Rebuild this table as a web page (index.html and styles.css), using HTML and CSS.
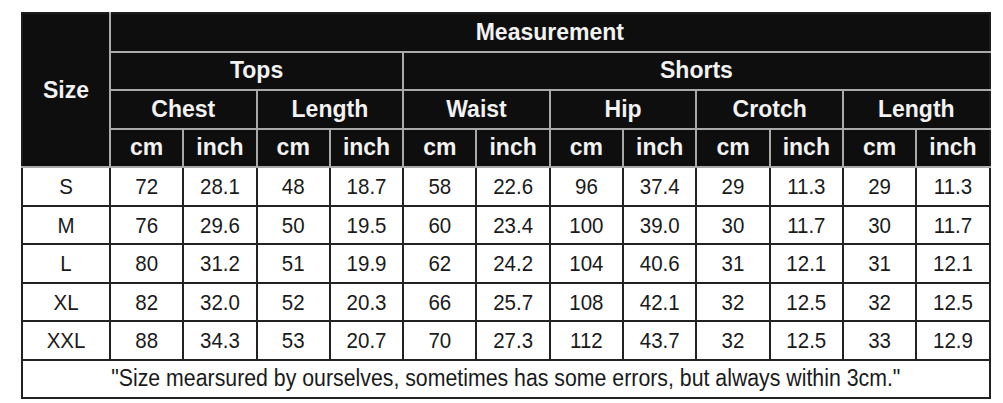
FILE: index.html
```html
<!DOCTYPE html>
<html>
<head>
<meta charset="utf-8">
<link rel="stylesheet" href="styles.css">
</head>
<body>
<table class="chart">
  <colgroup>
    <col class="c-size">
    <col><col><col><col><col><col><col><col><col><col><col><col>
  </colgroup>
  <thead>
    <tr>
      <th rowspan="4" class="size-h">Size</th>
      <th colspan="12">Measurement</th>
    </tr>
    <tr>
      <th colspan="4">Tops</th>
      <th colspan="8">Shorts</th>
    </tr>
    <tr>
      <th colspan="2">Chest</th>
      <th colspan="2">Length</th>
      <th colspan="2">Waist</th>
      <th colspan="2">Hip</th>
      <th colspan="2">Crotch</th>
      <th colspan="2">Length</th>
    </tr>
    <tr>
      <th>cm</th><th>inch</th><th>cm</th><th>inch</th><th>cm</th><th>inch</th>
      <th>cm</th><th>inch</th><th>cm</th><th>inch</th><th>cm</th><th>inch</th>
    </tr>
  </thead>
  <tbody>
    <tr><td><span>S</span></td><td><span>72</span></td><td><span>28.1</span></td><td><span>48</span></td><td><span>18.7</span></td><td><span>58</span></td><td><span>22.6</span></td><td><span>96</span></td><td><span>37.4</span></td><td><span>29</span></td><td><span>11.3</span></td><td><span>29</span></td><td><span>11.3</span></td></tr>
    <tr><td><span>M</span></td><td><span>76</span></td><td><span>29.6</span></td><td><span>50</span></td><td><span>19.5</span></td><td><span>60</span></td><td><span>23.4</span></td><td><span>100</span></td><td><span>39.0</span></td><td><span>30</span></td><td><span>11.7</span></td><td><span>30</span></td><td><span>11.7</span></td></tr>
    <tr><td><span>L</span></td><td><span>80</span></td><td><span>31.2</span></td><td><span>51</span></td><td><span>19.9</span></td><td><span>62</span></td><td><span>24.2</span></td><td><span>104</span></td><td><span>40.6</span></td><td><span>31</span></td><td><span>12.1</span></td><td><span>31</span></td><td><span>12.1</span></td></tr>
    <tr><td><span>XL</span></td><td><span>82</span></td><td><span>32.0</span></td><td><span>52</span></td><td><span>20.3</span></td><td><span>66</span></td><td><span>25.7</span></td><td><span>108</span></td><td><span>42.1</span></td><td><span>32</span></td><td><span>12.5</span></td><td><span>32</span></td><td><span>12.5</span></td></tr>
    <tr><td><span>XXL</span></td><td><span>88</span></td><td><span>34.3</span></td><td><span>53</span></td><td><span>20.7</span></td><td><span>70</span></td><td><span>27.3</span></td><td><span>112</span></td><td><span>43.7</span></td><td><span>32</span></td><td><span>12.5</span></td><td><span>33</span></td><td><span>12.9</span></td></tr>
    <tr><td colspan="13" class="note"><span>"Size mearsured by ourselves, sometimes has some errors, but always within 3cm."</span></td></tr>
  </tbody>
</table>
</body>
</html>
```

FILE: styles.css
```css
html, body {
  margin: 0;
  padding: 0;
  background: #ffffff;
}

body {
  padding: 12px 0 0 21px;
  font-family: "Liberation Sans", Arial, sans-serif;
}

.chart {
  border-collapse: collapse;
  table-layout: fixed;
  width: 968px;
  border: 2px solid #1c1c1c;
}

.chart col {
  width: 73.3px;
}

.chart col.c-size {
  width: 88px;
}

.chart th {
  background: #0e0e0e;
  color: #f2f2f2;
  font-weight: bold;
  font-size: 23px;
  height: 36.5px;
  padding: 0;
  text-align: center;
  vertical-align: middle;
  border: 2px solid #a9a9a9;
  line-height: 1;
}

.chart thead tr:first-child th {
  border-top-color: #1c1c1c;
}

.chart thead th:last-child {
  border-right-color: #1c1c1c;
}

.chart th.size-h {
  border-left-color: #1c1c1c;
}

.chart td {
  color: #1a1a1a;
  font-size: 20.5px;
  height: 36.5px;
  padding: 0;
  text-align: center;
  vertical-align: middle;
  border: 2px solid #222222;
  line-height: 1;
}

.chart td span {
  display: inline-block;
  transform: scaleY(1.12);
}

.chart td.note {
  font-size: 21.3px;
}
```
